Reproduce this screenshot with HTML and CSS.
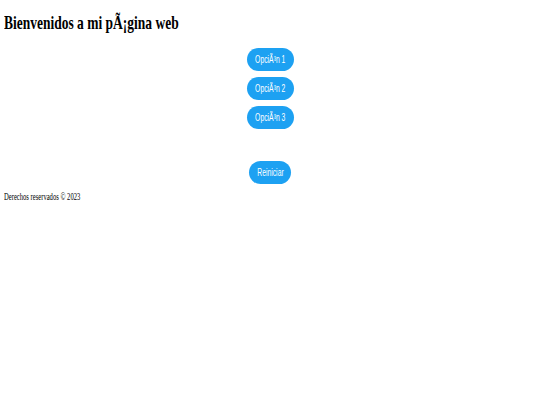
FILE: index.html
```html
<!DOCTYPE html>
<html lang="es">
<head>
<meta charset="utf-8">
<title>Bienvenidos</title>
<link rel="stylesheet" href="styles.css">
</head>
<body>
<header class="header">
  <h1 class="title"><span class="squeeze">Bienvenidos a mi pÃ¡gina web</span></h1>
</header>
<main class="main">
  <div class="options">
    <button class="btn"><span class="squeeze-c">OpciÃ³n 1</span></button>
    <button class="btn"><span class="squeeze-c">OpciÃ³n 2</span></button>
    <button class="btn"><span class="squeeze-c">OpciÃ³n 3</span></button>
  </div>
  <div class="reset-row">
    <button class="btn btn-reset"><span class="squeeze-c">Reiniciar</span></button>
  </div>
</main>
<footer class="footer"><span class="squeeze-f">Derechos reservados © 2023</span></footer>
</body>
</html>
```
FILE: styles.css
```css
html, body {
  margin: 0;
  padding: 0;
  background: #ffffff;
}
body {
  padding: 0 4px;
  font-family: "Liberation Serif", "Times New Roman", serif;
  color: #000;
}
.squeeze {
  display: inline-block;
  transform: scaleX(0.71);
  transform-origin: left center;
  white-space: nowrap;
}
.squeeze-f {
  display: inline-block;
  transform: scaleX(0.66);
  transform-origin: left center;
  white-space: nowrap;
}
.squeeze-c {
  display: inline-block;
  transform: scaleX(0.68);
  transform-origin: center center;
  white-space: nowrap;
}
.header {
  padding-top: 13px;
}
.title {
  margin: 0;
  font-size: 19px;
  line-height: 20px;
  font-weight: bold;
}
.main {
  display: flex;
  flex-direction: column;
  align-items: center;
  padding-top: 15px;
}
.options {
  display: flex;
  flex-direction: column;
  align-items: center;
  gap: 6px;
}
.btn {
  display: flex;
  align-items: center;
  justify-content: center;
  width: 47px;
  height: 23px;
  padding: 0;
  border: none;
  border-radius: 12px;
  background: #1da1f2;
  color: #ffffff;
  font-family: "Liberation Sans", Arial, sans-serif;
  font-size: 10px;
}
.reset-row {
  margin-top: 32px;
}
.btn-reset {
  width: 42px;
}
.footer {
  margin-top: 7px;
  font-size: 10px;
  line-height: 12px;
}
```
